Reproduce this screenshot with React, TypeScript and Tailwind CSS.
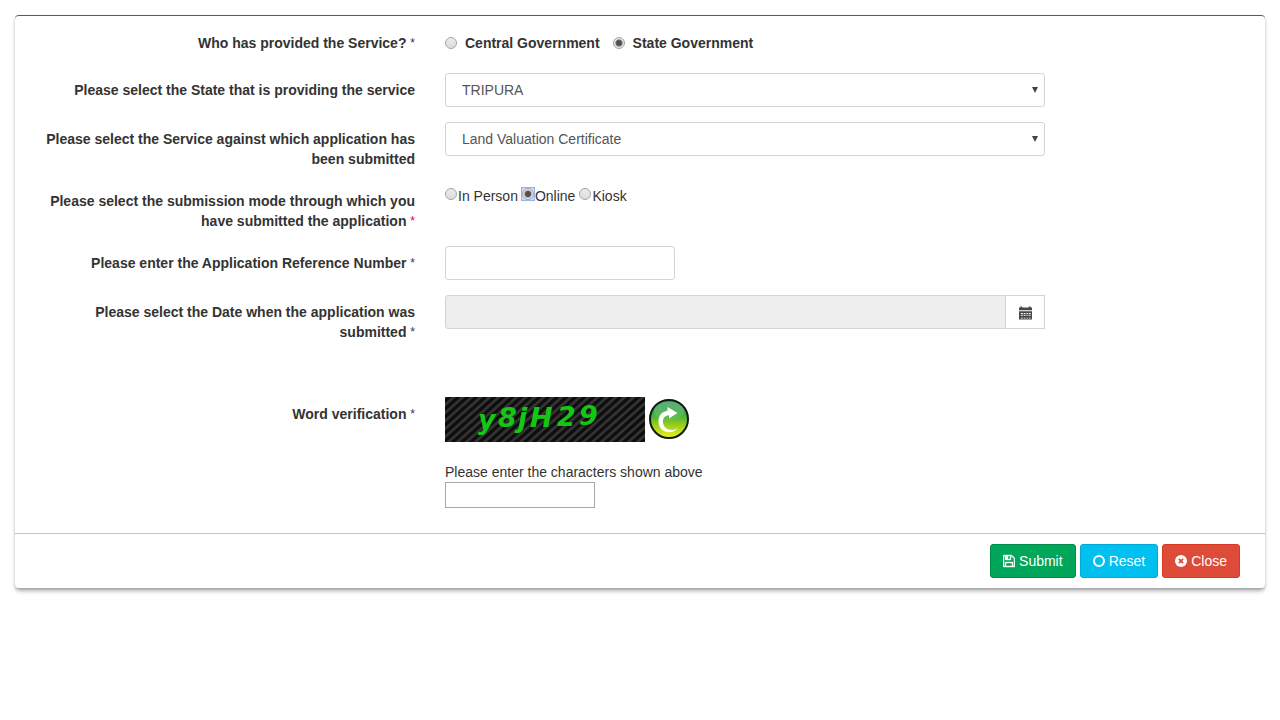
import { useId, useState } from "react";
import type { ReactNode } from "react";

const RADIO =
  "h-3 w-3 shrink-0 appearance-none rounded-full border border-[#a6a6a6] bg-linear-to-b from-[#ececec] to-[#dcdcdc] checked:bg-[radial-gradient(circle,#505050_0_2px,#6a6a6a_3px,#e2e2e2_4px)]";
const FIELD = "h-[34px] rounded-[3px] border border-[#d2d4d8] px-3 outline-none";
const BUTTON =
  "flex h-[34px] items-center gap-1 rounded-[3px] border px-3 text-white";

const Star = ({ red = false }: { red?: boolean }) => (
  <span
    className={
      red
        ? "align-[1px] text-xs leading-none font-normal text-[#e0002a]"
        : "align-[1px] text-xs leading-none font-normal text-[#33335a]"
    }
  >
    *
  </span>
);

/* Icons */
const SaveIcon = () => (
  <svg className="h-[14px] w-3" viewBox="128 0 1536 1792" fill="currentColor" stroke="currentColor" strokeWidth="50" aria-hidden="true">
    <path d="M512 1536h768v-384h-768v384zm896 0h128v-896q0-14-10-38.5t-20-34.5l-281-281q-10-10-34-20t-39-10v416q0 40-28 68t-68 28h-576q-40 0-68-28t-28-68v-416h-128v1280h128v-416q0-40 28-68t68-28h832q40 0 68 28t28 68v416zm-384-928v-320q0-13-9.5-22.5t-22.5-9.5h-192q-13 0-22.5 9.5t-9.5 22.5v320q0 13 9.5 22.5t22.5 9.5h192q13 0 22.5-9.5t9.5-22.5zm640 32v928q0 40-28 68t-68 28h-1344q-40 0-68-28t-28-68v-1344q0-40 28-68t68-28h928q40 0 88 20t76 48l280 280q28 28 48 76t20 88z" />
  </svg>
);

const CircleIcon = () => (
  <svg className="h-3 w-3" viewBox="0 0 12 12" fill="none" aria-hidden="true">
    <circle cx="6" cy="6" r="5" stroke="currentColor" strokeWidth="2" />
  </svg>
);

const CloseIcon = () => (
  <svg className="h-3 w-3" viewBox="0 0 12 12" aria-hidden="true">
    <circle cx="6" cy="6" r="6" fill="currentColor" />
    <path d="M3.9 3.9l4.2 4.2M8.1 3.9L3.9 8.1" stroke="#dd4b39" strokeWidth="1.8" />
  </svg>
);

const CalendarIcon = () => (
  <svg className="h-[14px] w-[13px]" viewBox="0 0 14 14" fill="#484848" aria-hidden="true">
    <path d="M0 1h1.500V0h2v1h7V0h2v1H14v3H0z" />
    <path
      fillRule="evenodd"
      d="M0 5h14v9H0zM2 7v1h2V7zm3 0v1h2V7zm3 0v1h1.500V7zm2.500 0v1h2V7zM2 9v1h2V9zm3 0v1h2V9zm3 0v1h1.500V9zm2.500 0v1h2V9zM2 12v1h2v-1zm3 0v1h2v-1zm3 0v1h1.500v-1zm2.500 0v1h2v-1z"
    />
  </svg>
);

const RefreshIcon = () => (
  <svg className="h-10 w-10" viewBox="0 0 40 40" aria-hidden="true">
    <defs>
      <linearGradient id="ball" x1="0" y1="0" x2="0" y2="1">
        <stop offset="0" stopColor="#1f8f56" />
        <stop offset="0.45" stopColor="#4fb53c" />
        <stop offset="0.65" stopColor="#98cc1c" />
        <stop offset="1" stopColor="#f0f01c" />
      </linearGradient>
      <linearGradient id="gloss" x1="0" y1="0" x2="0" y2="1">
        <stop offset="0" stopColor="#fff" stopOpacity="0.25" />
        <stop offset="1" stopColor="#fff" stopOpacity="0.05" />
      </linearGradient>
    </defs>
    <circle cx="20" cy="20" r="19" fill="url(#ball)" stroke="#0d1a0d" strokeWidth="2" />
    <ellipse cx="20" cy="12" rx="15" ry="9.500" fill="url(#gloss)" />
    <path
      d="M18.500 8L28.500 14l-8.500 5.500v-3.200c-4.500.3-6.500 3.500-6 7.500.5 4.500 4 7.200 8.500 7.200 2.500 0 4.500-.8 6.300-2.300-2 3-5 4.600-9 4.500-6.300-.2-10.500-5-10.300-10.700C9.700 16.500 13 12.500 18.500 11.800z"
      fill="#fff"
    />
  </svg>
);

const Captcha = () => (
  <svg className="h-[45px] w-[200px]" viewBox="0 0 200 45" role="img" aria-label="Verification characters">
    <defs>
      <pattern id="stripes" width="9" height="8" patternUnits="userSpaceOnUse">
        <rect width="9" height="8" fill="#0e0e0e" />
        <path d="M-2.250 2l4.500-4M0 8l9-8M6.750 10l4.500-4" stroke="#333" strokeWidth="2.8" />
      </pattern>
    </defs>
    <rect width="200" height="45" fill="url(#stripes)" />
    <text
      x="33 53 73 85 112 134"
      y="32 30 30 30 29 28"
      fill="#12c812"
      className="font-['DejaVu_Sans'] text-[27px] font-bold italic"
    >
      y8jH29
    </text>
  </svg>
);

const Row = ({
  label,
  htmlFor,
  id,
  className = "mb-[15px]",
  children,
}: {
  label: ReactNode;
  htmlFor?: string;
  id?: string;
  className?: string;
  children: ReactNode;
}) => (
  <div className={`-mx-[15px] flex ${className}`}>
    <div className="w-1/3 px-[15px] pt-[7px] text-right font-bold">
      {htmlFor ? (
        <label htmlFor={htmlFor} className="block">{label}</label>
      ) : (
        <div id={id}>{label}</div>
      )}
    </div>
    <div className="w-1/2 px-[15px]">{children}</div>
  </div>
);

const Select = ({ id, options }: { id: string; options: string[] }) => (
  <div className="relative">
    <select id={id} className={`${FIELD} w-full appearance-none bg-white pl-4 text-[#555]`}>
      {options.map((option) => (
        <option key={option}>{option}</option>
      ))}
    </select>
    <svg
      className="pointer-events-none absolute top-[14px] right-[7px] h-[6px] w-[6px]"
      viewBox="0 0 6 6"
      fill="#444"
      aria-hidden="true"
    >
      <path d="M0 0h6L3 6z" />
    </svg>
  </div>
);

export default function App() {
  const uid = useId();
  const [provider, setProvider] = useState("State Government");
  const [mode, setMode] = useState("Online");

  return (
    <main className="bg-white p-[15px] font-['Liberation_Sans',Arial,sans-serif] text-sm leading-5 text-[#333]">
      <form
        onSubmit={(e) => e.preventDefault()}
        className="rounded-[4px] border-t border-[#4a5f70] bg-white shadow-[0_4px_4px_-1px_rgba(0,0,0,0.3),0_1px_3px_rgba(0,0,0,0.16)]"
      >
        <div className="p-2.5 pb-[25px]">
          <Row
            id={`${uid}-provider`}
            className="mb-5"
            label={<>Who has provided the Service? <Star /></>}
          >
            <div
              role="radiogroup"
              aria-labelledby={`${uid}-provider`}
              className="flex gap-[13px] pt-[7px] font-bold"
            >
              {["Central Government", "State Government"].map((name) => (
                <label key={name} className="flex items-center gap-2">
                  <input
                    type="radio"
                    name="provider"
                    className={RADIO}
                    checked={provider === name}
                    onChange={() => setProvider(name)}
                  />
                  {name}
                </label>
              ))}
            </div>
          </Row>

          <Row htmlFor="state" label="Please select the State that is providing the service">
            <Select id="state" options={["TRIPURA", "ASSAM", "MANIPUR"]} />
          </Row>

          <Row
            htmlFor="service"
            label="Please select the Service against which application has been submitted"
          >
            <Select id="service" options={["Land Valuation Certificate", "Income Certificate"]} />
          </Row>

          <Row
            id={`${uid}-mode`}
            label={
              <>
                Please select the submission mode through which you have submitted the application{" "}
                <Star red />
              </>
            }
          >
            <div
              role="radiogroup"
              aria-labelledby={`${uid}-mode`}
              className="flex gap-1 pt-0.5"
            >
              {["In Person", "Online", "Kiosk"].map((name) => (
                <label key={name} className="flex items-start gap-px">
                  <span
                    className={
                      mode === name
                        ? "mt-0.5 flex bg-[#c8dbf8] ring-1 ring-[#8fb4ee]"
                        : "mt-0.5 flex"
                    }
                  >
                    <input
                      type="radio"
                      name="mode"
                      className={RADIO}
                      checked={mode === name}
                      onChange={() => setMode(name)}
                    />
                  </span>
                  {name}
                </label>
              ))}
            </div>
          </Row>

          <Row
            htmlFor="reference"
            label={<>Please enter the Application Reference Number <Star /></>}
          >
            <input id="reference" type="text" className={`${FIELD} block w-[230px]`} />
          </Row>

          <Row
            htmlFor="date"
            className="mb-[55px]"
            label={<>Please select the Date when the application was submitted <Star /></>}
          >
            <div className="flex">
              <input
                id="date"
                type="text"
                readOnly
                className={`${FIELD} min-w-0 flex-1 rounded-r-none bg-[#eee]`}
              />
              <button
                type="button"
                aria-label="Open calendar"
                className="flex h-[34px] w-[39px] items-center justify-center border border-l-0 border-[#d2d4d8] pt-0.5"
              >
                <CalendarIcon />
              </button>
            </div>
          </Row>

          {/* Captcha */}
          <Row htmlFor="captcha" className="" label={<>Word verification <Star /></>}>
            <div className="mb-5 flex items-start gap-1">
              <Captcha />
              <button type="button" aria-label="Refresh characters" className="pt-0.5">
                <RefreshIcon />
              </button>
            </div>
            <label htmlFor="captcha" className="block">
              Please enter the characters shown above
            </label>
            <input
              id="captcha"
              type="text"
              className="block h-[26px] w-[150px] border border-[#a9a9a9] px-1 outline-none"
            />
          </Row>
        </div>

        {/* Actions */}
        <div className="flex justify-end gap-1 border-t border-[#c4c4c4] py-2.5 pr-[25px]">
          <button type="submit" className={`${BUTTON} border-[#008d4c] bg-[#00a65a]`}>
            <SaveIcon />
            Submit
          </button>
          <button type="reset" className={`${BUTTON} border-[#00acd6] bg-[#00c0ef]`}>
            <CircleIcon />
            Reset
          </button>
          <button type="button" className={`${BUTTON} border-[#d73925] bg-[#dd4b39]`}>
            <CloseIcon />
            Close
          </button>
        </div>
      </form>
    </main>
  );
}
